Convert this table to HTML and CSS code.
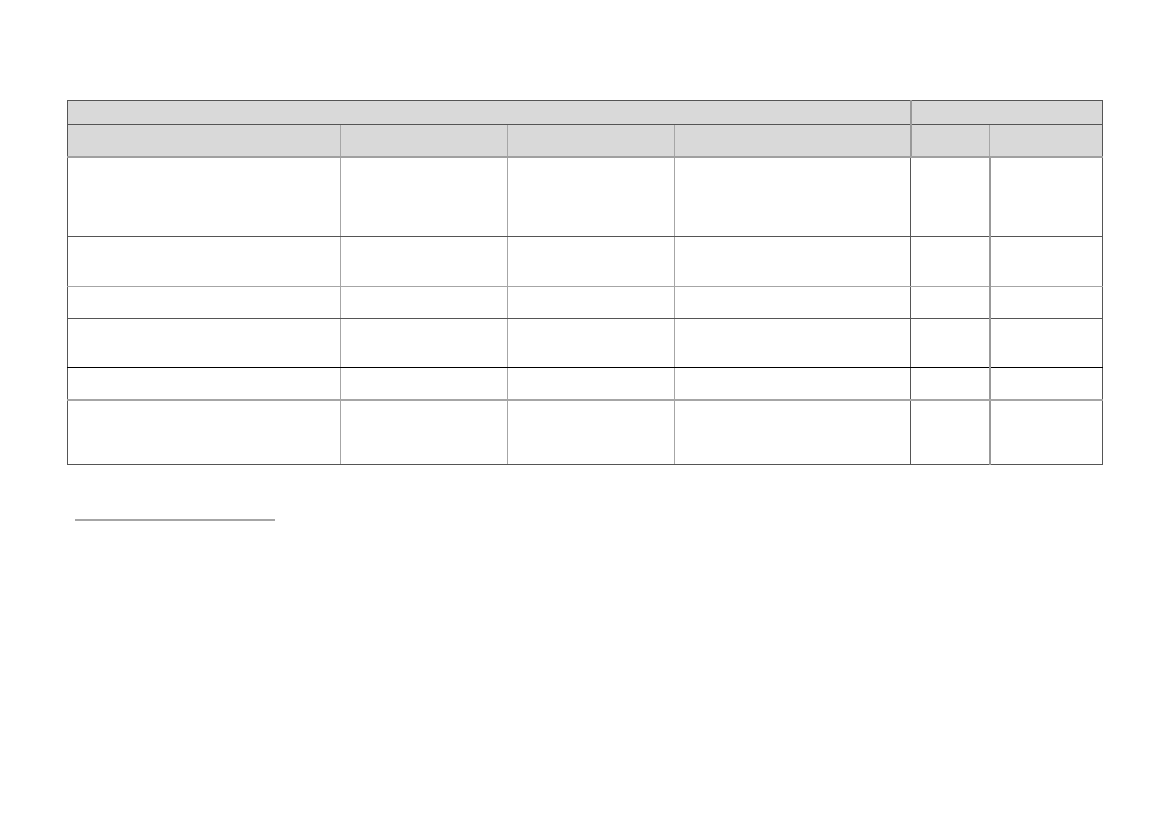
FILE: index.html
```html
<!DOCTYPE html>
<html lang="en">
<head>
    <meta charset="UTF-8">
    <meta name="viewport" content="width=device-width, initial-scale=1.0">
    <title>Table</title>
    <link rel="stylesheet" href="styles.css">
</head>
<body>
    <main class="page">
        <table class="grid">
            <colgroup>
                <col class="c1">
                <col class="c2">
                <col class="c3">
                <col class="c4">
                <col class="c5">
                <col class="c6">
            </colgroup>
            <thead>
                <tr class="head-top">
                    <th colspan="4" class="sep-right"></th>
                    <th colspan="2"></th>
                </tr>
                <tr class="head-sub">
                    <th></th>
                    <th></th>
                    <th></th>
                    <th class="sep-right"></th>
                    <th></th>
                    <th></th>
                </tr>
            </thead>
            <tbody>
                <tr class="r1 line-dark">
                    <td></td><td></td><td></td><td class="dark-right"></td><td class="sep-right"></td><td></td>
                </tr>
                <tr class="r2 line-light">
                    <td></td><td></td><td></td><td class="dark-right"></td><td class="sep-right"></td><td></td>
                </tr>
                <tr class="r3 line-dark">
                    <td></td><td></td><td></td><td class="dark-right"></td><td class="sep-right"></td><td></td>
                </tr>
                <tr class="r4 line-black">
                    <td></td><td></td><td></td><td class="dark-right"></td><td class="sep-right"></td><td></td>
                </tr>
                <tr class="r5 line-gray">
                    <td></td><td></td><td></td><td class="dark-right"></td><td class="sep-right"></td><td></td>
                </tr>
                <tr class="r6">
                    <td></td><td></td><td></td><td class="dark-right"></td><td class="sep-right"></td><td></td>
                </tr>
            </tbody>
        </table>

        <div class="footnote-rule"></div>
    </main>
</body>
</html>
```

FILE: styles.css
```css
* {
  margin: 0;
  padding: 0;
  box-sizing: border-box;
}

body {
  font-family: "Liberation Sans", Arial, sans-serif;
  background-color: #fff;
}

.page {
  padding: 100px 0 0 67px;
}

.grid {
  width: 1035px;
  border-collapse: collapse;
  table-layout: fixed;
  border: 1px solid #555;
}

.c1 { width: 273px; }
.c2 { width: 167px; }
.c3 { width: 167px; }
.c4 { width: 236px; }
.c5 { width: 79px; }
.c6 { width: 113px; }

th,
td {
  padding: 0;
  border-left: 1px solid #a6a6a6;
  border-right: 1px solid #a6a6a6;
}

th {
  background-color: #d9d9d9;
}

.head-top {
  height: 24px;
}

.head-top th {
  border-top: 1px solid #555;
  border-bottom: 1px solid #555;
}

.head-sub {
  height: 32px;
}

.head-sub th {
  border-bottom: 2px solid #a0a0a0;
}

.sep-right {
  border-right: 2px solid #999;
}

.dark-right {
  border-right: 1px solid #555;
}

td:first-child,
th:first-child {
  border-left: 1px solid #555;
}

td:last-child,
th:last-child {
  border-right: 1px solid #555;
}

.r1 { height: 80px; }
.r2 { height: 50px; }
.r3 { height: 32px; }
.r4 { height: 49px; }
.r5 { height: 32px; }
.r6 { height: 65px; }

.line-dark td {
  border-bottom: 1px solid #555;
}

.line-light td {
  border-bottom: 1px solid #a6a6a6;
}

.line-black td {
  border-bottom: 1px solid #000;
}

.line-gray td {
  border-bottom: 2px solid #a6a6a6;
}

.r6 td {
  border-bottom: 1px solid #555;
}

.footnote-rule {
  width: 200px;
  height: 2px;
  margin: 54px 0 0 8px;
  background-color: #a6a6a6;
}
```
